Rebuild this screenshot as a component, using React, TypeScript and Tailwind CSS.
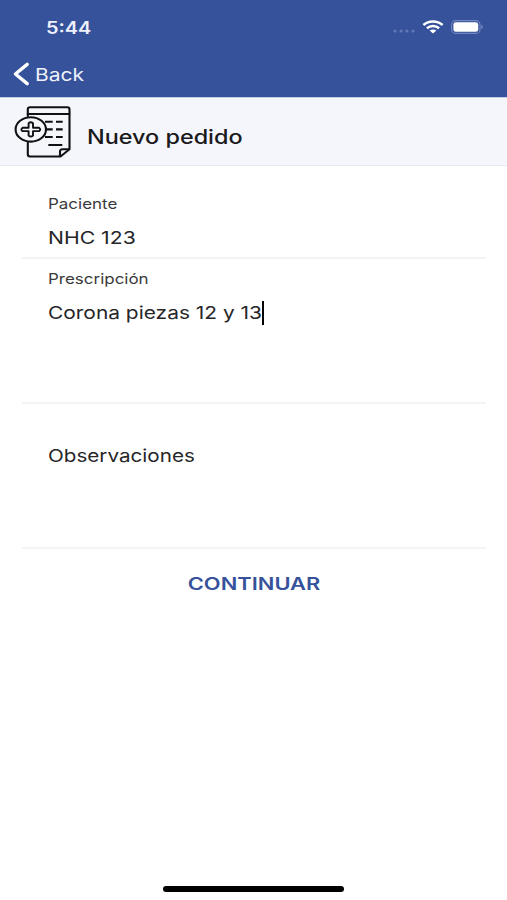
import { useState } from 'react';

type FieldProps = {
  label?: string;
  value: string;
  focused?: boolean;
  className: string;
  textClass: string;
};

const WIDE = 'inline-block origin-left whitespace-nowrap';

function StatusBar() {
  return (
    <div className="flex h-[54px] items-center justify-between pl-[46px] pr-[23px]">
      <span className={`${WIDE} mt-[2px] scale-x-[1.17] text-[17px] leading-6 font-semibold text-[#eef1fb]`}>5:44</span>
      <div className="flex items-center">
        <svg className="mt-[8px] mr-[7px]" width="22" height="4" viewBox="0 0 22 4" fill="#6279b8">
          <circle cx="2" cy="2" r="1.6" />
          <circle cx="8" cy="2" r="1.6" />
          <circle cx="14" cy="2" r="1.6" />
          <circle cx="20" cy="2" r="1.6" />
        </svg>
        <svg className="mr-[7px]" width="22" height="14" viewBox="0 0 22 14" fill="none" stroke="#fff" strokeWidth="2.5">
          <path d="M1.4 5C6.8 .2 15.2 .2 20.6 5" />
          <path d="M4.9 8.2c3.5-3 8.7-3 12.2 0" />
          <path d="M11 13.4 7.6 10.6c2-1.5 4.8-1.5 6.8 0z" fill="#fff" stroke="none" />
        </svg>
        <svg width="33" height="14" viewBox="0 0 33 14">
          <rect x=".6" y=".6" width="28.4" height="12.8" rx="4" fill="none" stroke="#7287c0" strokeWidth="1.1" />
          <rect x="2.4" y="2.2" width="24.8" height="9.6" rx="2.4" fill="#fff" />
          <path d="M30.4 4.8c1.8.8 1.8 3.6 0 4.4z" fill="#8093c6" />
        </svg>
      </div>
    </div>
  );
}

function OrderIcon() {
  return (
    <svg width="58" height="54" viewBox="0 0 58 54" fill="none" stroke="#101114" strokeWidth="2.1" strokeLinecap="round" strokeLinejoin="round">
      <path d="M13.8 10V3.5q0-2.2 2.2-2.2h37.3q2.2 0 2.2 2.2v39.8L46.5 50.5H16q-2.2 0-2.2-2.2V36" />
      <path d="M13.8 8h41.5" />
      <path d="M46 50v-4.3q0-2.5 2.5-2.5h6.5" />
      <path d="M31 15.8h7.7M42 15.8h6.7M32 23.4h6.7M42 23.4h6.7M31 31h7.7M42 31h6.7M34.3 39h14" strokeLinecap="butt" />
      <ellipse cx="16.8" cy="23.4" rx="15.2" ry="12.2" fill="#f4f6fb" />
      <path strokeWidth="1.9" d="M14.6 17.2q2.2-2 4.4 0v4.5h6q2.4 1.7 0 3.4h-6v4.5q-2.2 2-4.4 0v-4.5h-6q-2.4-1.7 0-3.4h6z" />
    </svg>
  );
}

function Field({ label, value, focused, className, textClass }: FieldProps) {
  return (
    <div className={`ml-[22px] mr-[21px] border-b-2 border-[#f4f4f5] pl-[26px] ${className}`}>
      {label && (
        <div className="h-5 text-[14.5px] leading-5 text-[#3a3a3c]">
          <span className={`${WIDE} scale-x-[1.17]`}>{label}</span>
        </div>
      )}
      <div className="relative h-6 text-[17.5px] leading-6 text-[#262628]">
        <span className={`${WIDE} ${textClass}`}>{value}</span>
        {focused && <span className="absolute left-[214px] top-0 h-6 w-[2px] bg-black" />}
      </div>
    </div>
  );
}

export default function App() {
  const [patient] = useState('NHC 123');
  const [prescription] = useState('Corona piezas 12 y 13');

  return (
    <div className="flex h-[900px] w-[507px] flex-col overflow-hidden bg-white font-['Inter',sans-serif]">
      <header className="h-[97px] bg-[#36529b]">
        <StatusBar />
        <button className="flex h-10 items-center pl-[13px] text-white">
          <svg width="17" height="24" viewBox="0 0 17 24" fill="none" stroke="currentColor" strokeWidth="3.4" strokeLinecap="round" strokeLinejoin="round">
            <path d="M14.2 2.4 2.4 12l11.8 9.6" />
          </svg>
          <span className={`${WIDE} mt-[2px] ml-[5px] scale-x-[1.2] text-[17.5px] leading-6 text-[#eef1fb]`}>Back</span>
        </button>
      </header>

      <div className="flex h-[69px] border-t border-b border-t-[#c3cde6] border-b-[#e6e9ef] bg-[#f4f6fb] pl-[14px] pt-[8px]">
        <OrderIcon />
        <h1 className={`${WIDE} ml-[15px] mt-[19px] h-6 scale-x-[1.2] text-[19.5px] leading-6 font-medium text-[#1a1a1c]`}>
          Nuevo pedido
        </h1>
      </div>

      <main>
        <Field label="Paciente" value={patient} className="flex h-[93px] flex-col gap-[12px] pt-[28px]" textClass="scale-x-[1.21]" />
        <Field label="Prescripción" value={prescription} focused className="flex h-[145px] flex-col gap-[12px] pt-[10px]" textClass="scale-x-[1.195]" />
        <Field value="Observaciones" className="h-[145px] pt-[40px]" textClass="scale-x-[1.18]" />
        <button className="mx-auto mt-[23px] block h-6 text-[17.5px] leading-6 font-semibold text-[#36529b]">
          <span className="inline-block scale-x-[1.25] whitespace-nowrap">CONTINUAR</span>
        </button>
      </main>

      <div className="mx-auto mt-auto mb-[8px] h-[6px] w-[181px] shrink-0 rounded-full bg-black" />
    </div>
  );
}
